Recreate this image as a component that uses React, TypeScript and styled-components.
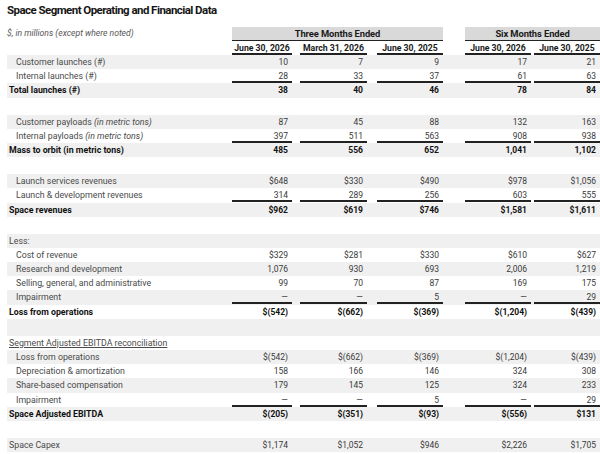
import React from "react";
import styled, { createGlobalStyle, css } from "styled-components";

const Global = createGlobalStyle`
  html, body { margin: 0; padding: 0; background: #ffffff; }
  body { font-family: "Roboto", "Liberation Sans", sans-serif; color: #333; }
`;

const COLS = "225px 60px 75px 76px 88px 69px";
const PADS = [0, 8, 10, 22, 3];

const Page = styled.div`
  width: 600px;
  height: 454px;
  overflow: hidden;
  padding-left: 7px;
  box-sizing: border-box;
`;

const Title = styled.h1`
  margin: 0;
  padding: 3px 0 0 0;
  height: 23px;
  box-sizing: border-box;
  font-size: 11.5px;
  font-weight: 700;
  color: #161616;
  letter-spacing: -0.55px;
  line-height: 14px;
`;

const GroupRow = styled.div`
  display: grid;
  grid-template-columns: ${COLS};
  height: 15px;
  margin-top: 4px;
`;

const Note = styled.div`
  font-size: 8.6px;
  font-style: italic;
  color: #555;
  line-height: 13px;
`;

const Band = styled.div<{ $start: number; $end: number; $pad: number }>`
  grid-column: ${(p) => p.$start} / ${(p) => p.$end};
  margin-left: ${(p) => p.$pad}px;
  background: #d9d9d9;
  border-bottom: 1.5px solid #222;
  height: 13px;
  text-align: center;
  font-size: 9.4px;
  font-weight: 700;
  color: #1a1a1a;
  letter-spacing: -0.1px;
  line-height: 14px;
`;

const HeadRow = styled.div`
  display: grid;
  grid-template-columns: ${COLS};
  height: 13px;
`;

const HeadCell = styled.div<{ $pad: number }>`
  padding-left: ${(p) => p.$pad}px;
`;

const HeadInner = styled.div`
  border-bottom: 2px solid #222;
  height: 11px;
  text-align: center;
  font-size: 8.7px;
  font-weight: 700;
  color: #1a1a1a;
  line-height: 12px;
`;

const Body = styled.div``;

const Row = styled.div<{ $blank?: boolean }>`
  display: grid;
  grid-template-columns: ${COLS};
  height: ${(p) => (p.$blank ? 17 : 14.2)}px;
  &:nth-child(odd) { background: #f0f0f0; }
`;

type Kind = "item" | "total" | "section" | "plain" | "ulsection";

const Label = styled.div<{ $kind: Kind }>`
  font-size: 8.8px;
  line-height: 14px;
  color: #4a4a4a;
  white-space: nowrap;
  padding-left: ${(p) => (p.$kind === "item" ? 9 : 2)}px;
  ${(p) =>
    p.$kind === "total" &&
    css`
      font-weight: 700;
      color: #111;
    `}
  ${(p) =>
    p.$kind === "ulsection" &&
    css`
      text-decoration: underline;
      text-underline-offset: 1px;
    `}
  em { font-style: italic; }
`;

const Cell = styled.div<{ $pad: number }>`
  padding-left: ${(p) => p.$pad}px;
`;

const Value = styled.div<{ $bold?: boolean; $rule?: boolean }>`
  height: 14px;
  box-sizing: border-box;
  text-align: right;
  padding-right: 4px;
  font-size: 8.5px;
  line-height: 14px;
  color: ${(p) => (p.$bold ? "#111" : "#3a3a3a")};
  font-weight: ${(p) => (p.$bold ? 700 : 400)};
  border-bottom: ${(p) => (p.$rule ? "2px solid #222" : "none")};
`;

type RowData =
  | { blank: true }
  | { label: React.ReactNode; kind: Kind; values?: string[]; rule?: boolean };

const R: RowData[] = [
  { label: "Customer launches (#)", kind: "item", values: ["10", "7", "9", "17", "21"] },
  { label: "Internal launches (#)", kind: "item", values: ["28", "33", "37", "61", "63"], rule: true },
  { label: "Total launches (#)", kind: "total", values: ["38", "40", "46", "78", "84"] },
  { blank: true },
  { label: <>Customer payloads <em>(in metric tons)</em></>, kind: "item", values: ["87", "45", "88", "132", "163"] },
  { label: <>Internal payloads <em>(in metric tons)</em></>, kind: "item", values: ["397", "511", "563", "908", "938"], rule: true },
  { label: "Mass to orbit (in metric tons)", kind: "total", values: ["485", "556", "652", "1,041", "1,102"] },
  { blank: true },
  { label: "Launch services revenues", kind: "item", values: ["$648", "$330", "$490", "$978", "$1,056"] },
  { label: "Launch & development revenues", kind: "item", values: ["314", "289", "256", "603", "555"], rule: true },
  { label: "Space revenues", kind: "total", values: ["$962", "$619", "$746", "$1,581", "$1,611"] },
  { blank: true },
  { label: "Less:", kind: "section" },
  { label: "Cost of revenue", kind: "item", values: ["$329", "$281", "$330", "$610", "$627"] },
  { label: "Research and development", kind: "item", values: ["1,076", "930", "693", "2,006", "1,219"] },
  { label: "Selling, general, and administrative", kind: "item", values: ["99", "70", "87", "169", "175"] },
  { label: "Impairment", kind: "item", values: ["—", "—", "5", "—", "29"], rule: true },
  { label: "Loss from operations", kind: "total", values: ["$(542)", "$(662)", "$(369)", "$(1,204)", "$(439)"] },
  { blank: true },
  { label: "Segment Adjusted EBITDA reconciliation", kind: "ulsection" },
  { label: "Loss from operations", kind: "item", values: ["$(542)", "$(662)", "$(369)", "$(1,204)", "$(439)"] },
  { label: "Depreciation & amortization", kind: "item", values: ["158", "166", "146", "324", "308"] },
  { label: "Share-based compensation", kind: "item", values: ["179", "145", "125", "324", "233"] },
  { label: "Impairment", kind: "item", values: ["—", "—", "5", "—", "29"], rule: true },
  { label: "Space Adjusted EBITDA", kind: "total", values: ["$(205)", "$(351)", "$(93)", "$(556)", "$131"] },
  { blank: true },
  { label: "Space Capex", kind: "plain", values: ["$1,174", "$1,052", "$946", "$2,226", "$1,705"] },
];

const HEADS = ["June 30, 2026", "March 31, 2026", "June 30, 2025", "June 30, 2026", "June 30, 2025"];

export default function App() {
  return (
    <Page>
      <Global />
      <Title>Space Segment Operating and Financial Data</Title>
      <GroupRow>
        <Note>$, in millions (except where noted)</Note>
        <Band $start={2} $end={5} $pad={0}>Three Months Ended</Band>
        <Band $start={5} $end={7} $pad={22}>Six Months Ended</Band>
      </GroupRow>
      <HeadRow>
        <div />
        {HEADS.map((h, i) => (
          <HeadCell key={i} $pad={PADS[i]}>
            <HeadInner>{h}</HeadInner>
          </HeadCell>
        ))}
      </HeadRow>
      <Body>
        {R.map((r, i) =>
          "blank" in r ? (
            <Row key={i} $blank />
          ) : (
            <Row key={i}>
              <Label $kind={r.kind}>{r.label}</Label>
              {(r.values ?? ["", "", "", "", ""]).map((v, j) => (
                <Cell key={j} $pad={PADS[j]}>
                  {r.values ? (
                    <Value $bold={r.kind === "total"} $rule={r.rule}>{v}</Value>
                  ) : null}
                </Cell>
              ))}
            </Row>
          )
        )}
      </Body>
    </Page>
  );
}
